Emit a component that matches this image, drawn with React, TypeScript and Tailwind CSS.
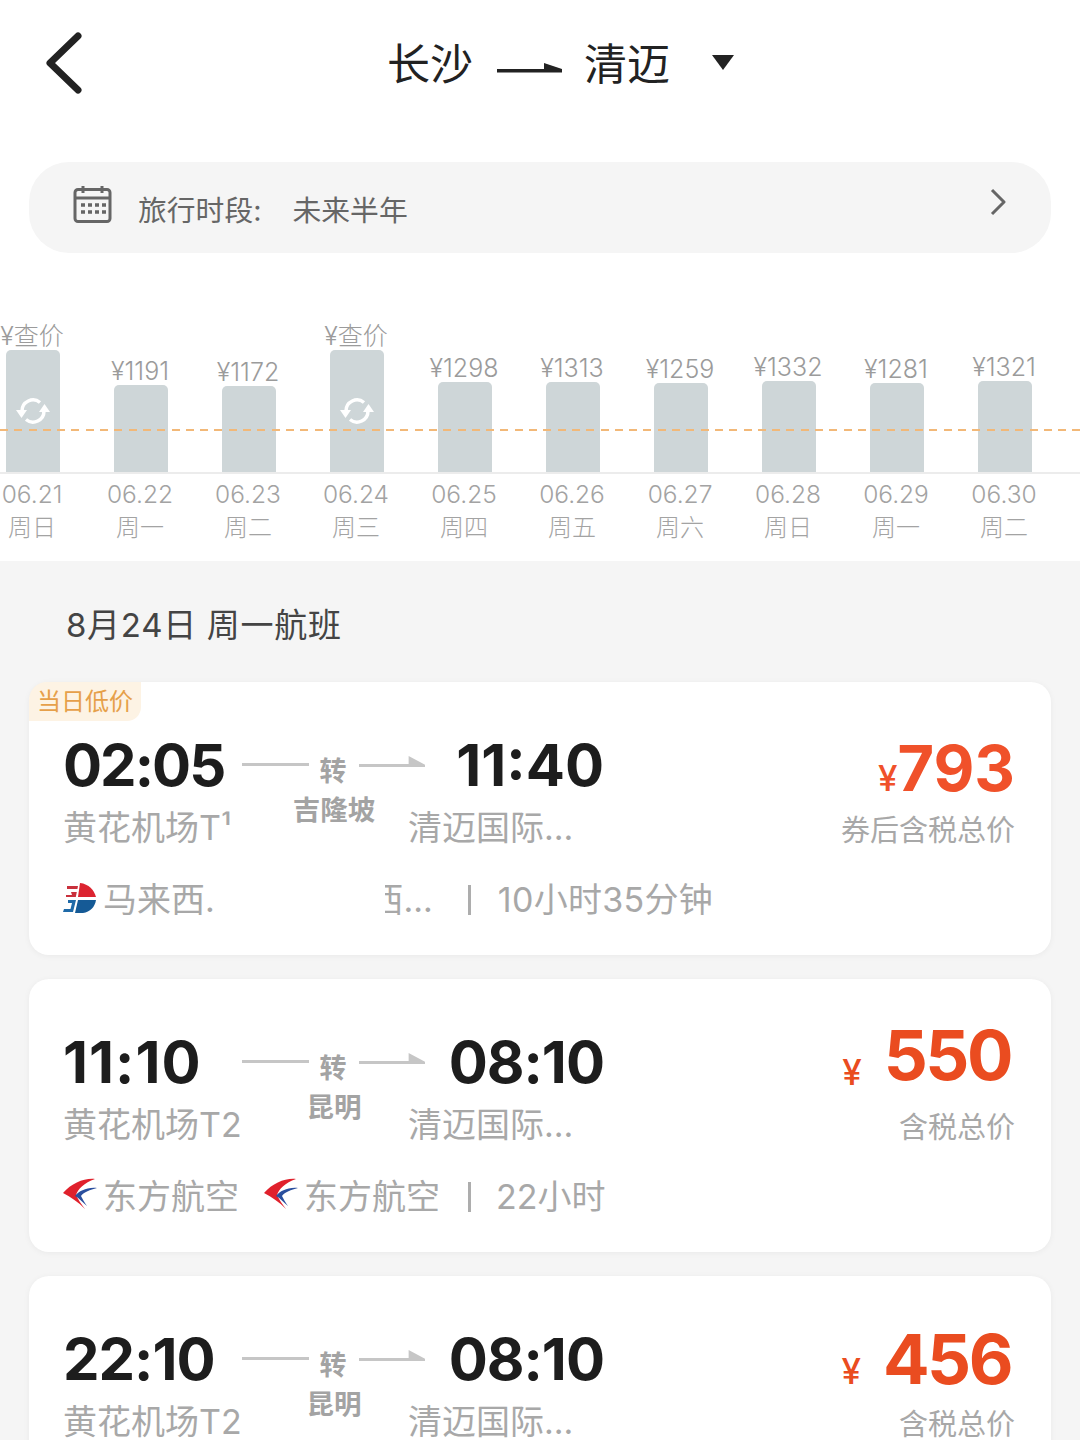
const days = [
  { price: '¥查价', date: '06.21', week: '周日', bar: 'h-[122px]', pending: true },
  { price: '¥1191', date: '06.22', week: '周一', bar: 'h-[87px]' },
  { price: '¥1172', date: '06.23', week: '周二', bar: 'h-[86px]' },
  { price: '¥查价', date: '06.24', week: '周三', bar: 'h-[122px]', pending: true },
  { price: '¥1298', date: '06.25', week: '周四', bar: 'h-[90px]' },
  { price: '¥1313', date: '06.26', week: '周五', bar: 'h-[90px]' },
  { price: '¥1259', date: '06.27', week: '周六', bar: 'h-[89px]' },
  { price: '¥1332', date: '06.28', week: '周日', bar: 'h-[91px]' },
  { price: '¥1281', date: '06.29', week: '周一', bar: 'h-[89px]' },
  { price: '¥1321', date: '06.30', week: '周二', bar: 'h-[91px]' },
]

function RefreshIcon() {
  return (
    <svg width="34" height="30" viewBox="0 0 34 30" fill="none">
      <path d="M6 15 A11 11 0 0 1 24 6.5" stroke="#fff" strokeWidth="3.5" />
      <path d="M28 15 A11 11 0 0 1 10 23.5" stroke="#fff" strokeWidth="3.5" />
      <path d="M0 14 L11 14 L5.5 22 Z" fill="#fff" />
      <path d="M34 16 L23 16 L28.5 8 Z" fill="#fff" />
    </svg>
  )
}

function MalaysiaLogo() {
  return (
    <svg width="34" height="32" viewBox="0 0 34 32" className="-mt-[3px]">
      <path d="M17 0 C26 1 31 7 33 14 H15 Z" fill="#dc2430" />
      <path d="M4 3 H15 L14.4 6 H4 Z M8 9 H13.8 L12.8 14 H3 V12 H9 Z" fill="#c9303c" />
      <path d="M15 17 H33 C32 24 27 29 20 30 H12 Z" fill="#155a96" />
      <path d="M5 17 H13 L10 29 H0 L1 26 H7.5 L9 20 H5 Z" fill="#1f6aa8" />
    </svg>
  )
}

function EasternLogo() {
  return (
    <svg width="34" height="32" viewBox="0 0 34 32" className="-mt-[7px]">
      <path d="M32 1 C21 0 9 5 0 15 C8 19 15 24 22 31 C18 26 15 21 13 17 C15 11 21 5 32 1 Z" fill="#e0212c" />
      <path d="M34 10 C24 9 16 13 12 18 C16 20 19 24 24 28 C21 24 19 20 18 18 C21 14 27 12 34 10 Z" fill="#2a4f9e" />
    </svg>
  )
}

function Connector() {
  return (
    <div className="flex w-[183px] items-start pt-[23px]">
      <div className="mt-[7px] h-[3px] w-[67px] bg-[#c6c6c6]" />
      <span className="ml-[11px] w-[27px] text-[27px] leading-[32px] font-bold text-[#a3a3a3]">转</span>
      <svg width="67" height="14" viewBox="0 0 67 14" className="-mt-[1px] ml-[12px]">
        <path d="M0 9 H50 V1 L67 10 V12 H0 Z" fill="#c6c6c6" />
      </svg>
    </div>
  )
}

function Flight({
  dep,
  arr,
  depAirport,
  via,
  price,
  priceLabel,
  coupon,
  children,
  tag,
  depTrack,
  arrTrack,
  priceTop,
  yenShift,
}: {
  dep: string
  arr: string
  depAirport: string
  via: string
  price: string
  priceLabel: string
  coupon?: boolean
  children: React.ReactNode
  tag?: boolean
  depTrack: string
  arrTrack: string
  priceTop?: string
  yenShift?: string
}) {
  return (
    <div className="relative h-[273px] shrink-0 rounded-[20px] bg-white pt-[51px] pl-[34px] shadow-[0_1px_6px_rgba(0,0,0,0.05)]">
      {tag && (
        <div className="absolute top-0 left-0 flex h-[39px] w-[112px] items-center justify-center rounded-tl-[18px] rounded-br-[14px] bg-[#fdf3e4] text-[24px] text-[#e6a04a]">
          当日低价
        </div>
      )}
      <div className="flex h-[64px]">
        <div className={`w-[179px] font-['Inter',sans-serif] text-[58px] leading-[64px] font-bold text-[#1d1d1d] ${depTrack}`}>{dep}</div>
        <Connector />
        <div className={`w-[179px] text-right font-['Inter',sans-serif] text-[58px] leading-[64px] font-bold text-[#1d1d1d] ${arrTrack}`}>{arr}</div>
      </div>
      <div className="flex h-[62px] items-center text-[34px] leading-[62px] text-[#a8a8a8]">
        <div className="w-[187px] whitespace-nowrap">{depAirport}</div>
        <div className="-mt-[36px] -mr-[10px] w-[168px] text-center text-[27.5px] leading-[32px] font-bold text-[#a3a3a3]">{via}</div>
        <div className="whitespace-nowrap">清迈国际...</div>
      </div>
      <div className="mt-[21px] flex h-[40px] items-center text-[34px] leading-[40px] text-[#a8a8a8]">{children}</div>
      {coupon ? (
        <div className="absolute top-[50px] right-[36px] flex items-baseline justify-end font-['Inter',sans-serif] leading-[72px] text-[#f0512a]">
          <span className="text-[35px] font-medium">¥</span>
          <span className="text-[63px] font-bold">{price}</span>
        </div>
      ) : (
        <div className={`absolute right-[40px] flex items-baseline justify-end font-['Inter',sans-serif] leading-[80px] text-[#ea4c20] ${priceTop}`}>
          <span className={`mr-[22px] text-[35px] font-medium ${yenShift}`}>¥</span>
          <span className="text-[69px] font-bold tracking-[-2.5px]">{price}</span>
        </div>
      )}
      <div className="absolute top-[130px] right-[36px] text-[29px] leading-[38px] text-[#a8a8a8]">{priceLabel}</div>
    </div>
  )
}

export default function App() {
  return (
    <div className="h-[1440px] w-[1080px] overflow-hidden bg-[#f5f5f5] font-['Inter','Noto_Sans_CJK_SC',sans-serif]">
      <div className="h-[561px] bg-white">
        <header className="relative flex h-[162px] items-start justify-center pt-[36px]">
          <svg width="40" height="66" viewBox="0 0 40 66" className="absolute top-[30px] left-[44px]" fill="none">
            <path d="M34 6 L6 33 L34 60" stroke="#222" strokeWidth="7" strokeLinecap="round" strokeLinejoin="round" />
          </svg>
          <div className="ml-[41px] flex items-center text-[43px] leading-[56px] text-[#222]">
            <span>长沙</span>
            <svg width="66" height="14" viewBox="0 0 66 14" className="mt-[8px] mr-[21px] ml-[24px]">
              <path d="M0 8 H47 V2 L65 8 V11.5 H0 Z" fill="#222" />
            </svg>
            <span>清迈</span>
            <svg width="22" height="15" viewBox="0 0 22 15" className="mb-[4px] ml-[42px]">
              <path d="M0 0 H22 L11 15 Z" fill="#222" />
            </svg>
          </div>
        </header>
        <div className="mx-[29px] flex h-[91px] items-center rounded-[40px] bg-[#f5f5f5] pr-[45px] pl-[44px]">
          <svg width="40" height="40" viewBox="0 0 40 40" className="mb-[5px]" fill="none">
            <rect x="2" y="4.5" width="35" height="32" rx="3" stroke="#666" strokeWidth="3" />
            <path d="M2 13 H37" stroke="#666" strokeWidth="3" />
            <path d="M10 1 V8 M29 1 V8" stroke="#666" strokeWidth="3" />
            <path d="M8 20 H12 M15 20 H19 M22 20 H26 M29 20 H33 M8 27 H12 M15 27 H19 M22 27 H26 M29 27 H33" stroke="#666" strokeWidth="3.5" />
          </svg>
          <span className="mt-[6px] ml-[25px] text-[28.8px] leading-[40px] text-[#666]">旅行时段:</span>
          <span className="mt-[6px] ml-[31px] text-[28.8px] leading-[40px] text-[#666]">未来半年</span>
          <svg width="16" height="28" viewBox="0 0 16 28" className="mb-[12px] ml-auto" fill="none">
            <path d="M2 2 L14 14 L2 26" stroke="#666" strokeWidth="3" strokeLinejoin="round" />
          </svg>
        </div>
        <div className="relative mt-[67px]">
          <div className="-ml-[22px] flex h-[154px] items-end border-b-2 border-[#ececec]">
            {days.map((d) => (
              <div key={d.date} className="flex w-[108px] shrink-0 flex-col items-center">
                <span className="text-[25px] leading-[28px] font-light whitespace-nowrap text-[#9b9b9b]">{d.price}</span>
                <div className={`ml-[1px] flex w-[54px] items-start justify-center rounded-t-[5px] bg-[#ced6d8] pt-[46px] ${d.bar}`}>
                  {d.pending && <RefreshIcon />}
                </div>
              </div>
            ))}
          </div>
          <div className="-ml-[22px] flex pt-[3px]">
            {days.map((d) => (
              <div key={d.date} className="flex w-[108px] shrink-0 flex-col items-center text-[#a3a3a3]">
                <span className="text-[24.5px] leading-[34px] font-light">{d.date}</span>
                <span className="text-[24px] leading-[34px] font-light">{d.week}</span>
              </div>
            ))}
          </div>
          <div className="absolute top-[109px] right-0 left-0 h-[2px] bg-[repeating-linear-gradient(to_right,#f2b878_0_8px,transparent_8px_14.3px)]" />
        </div>
      </div>
      <h2 className="mt-[41px] ml-[66px] text-[33px] leading-[46px] tracking-[0.7px] text-[#444]">8月24日 周一航班</h2>
      <div className="mx-[29px] mt-[34px] flex flex-col gap-[24px]">
        <Flight dep="02:05" arr="11:40" depAirport="黄花机场T¹" via="吉隆坡" price="793" priceLabel="券后含税总价" coupon tag depTrack="tracking-[-2px]" arrTrack="tracking-[0px]">
          <MalaysiaLogo />
          <span className="ml-[6px] whitespace-nowrap">马来西.</span>
          <span className="ml-[170px] flex w-[48px] justify-end overflow-hidden whitespace-nowrap">西...</span>
          <div className="ml-[35px] h-[30px] w-[3px] bg-[#adadad]" />
          <span className="ml-[27px] tracking-[0.3px] whitespace-nowrap">10小时35分钟</span>
        </Flight>
        <Flight dep="11:10" arr="08:10" depAirport="黄花机场T2" via="昆明" price="550" priceLabel="含税总价" depTrack="tracking-[1px]" arrTrack="tracking-[-1px]" priceTop="top-[36px]" yenShift="translate-y-[5px]">
          <EasternLogo />
          <span className="ml-[6px] whitespace-nowrap">东方航空</span>
          <span className="ml-[25px]"><EasternLogo /></span>
          <span className="ml-[6px] whitespace-nowrap">东方航空</span>
          <div className="ml-[28px] h-[30px] w-[3px] bg-[#adadad]" />
          <span className="ml-[25px] whitespace-nowrap">22小时</span>
        </Flight>
        <Flight dep="22:10" arr="08:10" depAirport="黄花机场T2" via="昆明" price="456" priceLabel="含税总价" depTrack="tracking-[-1px]" arrTrack="tracking-[-1px]" priceTop="top-[43px]">
          <EasternLogo />
        </Flight>
      </div>
    </div>
  )
}
